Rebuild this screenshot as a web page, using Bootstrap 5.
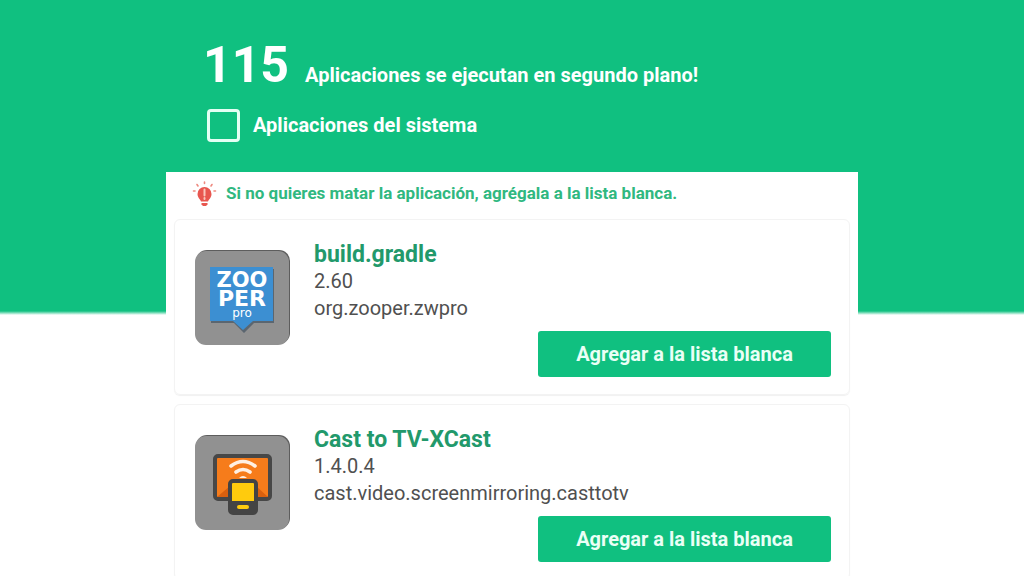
<!DOCTYPE html>
<html lang="es">
<head>
<meta charset="utf-8">
<meta name="viewport" content="width=device-width, initial-scale=1">
<title>Aplicaciones en segundo plano</title>
<link href="https://cdn.jsdelivr.net/npm/bootstrap@5.3.0/dist/css/bootstrap.min.css" rel="stylesheet">
<style>
  :root { --brand: #10c080; --title: #22996b; }
  body {
    font-family: Roboto, "Liberation Sans", sans-serif;
    font-size: 20px;
    line-height: 27px;
    color: #505050;
    background: linear-gradient(var(--brand) 311px, #fff 315px) no-repeat #fff;
    scrollbar-width: none;
  }
  body::-webkit-scrollbar { display: none; }
  .screen { max-width: 692px; }
  .summary { padding: 37px 40px 30px 37px; gap: 16px; }
  .count { font-size: 50px; line-height: 56px; }
  .system-check { gap: 13px; padding-left: 4px; }
  .system-check .form-check-input {
    width: 33px; height: 33px; border: 3px solid #e4fff4; border-radius: 4px;
    background-color: transparent;
  }
  .panel { padding: 0 8px 16px 8px; }
  .hint { height: 47px; padding: 0 18px 4px; gap: 9px; font-size: 17px; color: #30b880; }
  .app-card { border: 1px solid #f3f3f3; border-radius: 6px; padding: 21px 18px 17px 20px; margin-bottom: 9px; box-shadow: 0 1px 1px #f1f1f1; }
  .app-icon { margin-top: 9px; }
  .app-row { gap: 23px; }
  .app-name { font-size: 23px; line-height: 27px; color: var(--title); }
  .btn-add {
    --bs-btn-color: #eafff6; --bs-btn-bg: var(--brand);
    --bs-btn-hover-color: #fff; --bs-btn-hover-bg: #0eac73;
    --bs-btn-border-radius: 3px;
    width: 293px; height: 46px; font-size: 20px; font-weight: 700; border: 0;
  }
  .app-card .btn-add { margin-top: -15px; }
  .logo-text { font-family: "DejaVu Sans", sans-serif; font-weight: 700; fill: #fff; }
  .logo-note { font-weight: 400; }
</style>
</head>
<body>
<div class="screen container-fluid p-0">
  <header class="summary d-flex flex-column text-white fw-bold">
    <h1 class="d-flex align-items-baseline gap-3 m-0 fw-bold">
      <span class="count">115</span>
      <span class="fs-5">Aplicaciones se ejecutan en segundo plano!</span>
    </h1>
    <div class="system-check d-flex align-items-center">
      <input class="form-check-input m-0" type="checkbox" id="system">
      <label for="system">Aplicaciones del sistema</label>
    </div>
  </header>

  <main class="panel bg-white">
    <p class="hint d-flex align-items-center m-0 fw-bold">
      <svg width="25" height="26" viewBox="0 0 25 26" aria-hidden="true">
        <g stroke="#ee8a80" stroke-width="1.6" stroke-linecap="round">
          <path d="M12.500 1v1.500M5 3.500l1 1.500M20 3.500l-1 1.500M1.500 10h1.500M22 10h1.500"/>
        </g>
        <path d="M12.500 6a7 7 0 0 0-7 7c0 3.500 2.500 5 3.500 7.500h7c1-2.500 3.500-4 3.500-7.500a7 7 0 0 0-7-7z" fill="#e8564f"/>
        <path d="M9.500 22h6v1.500l-1.500 1.500h-3l-1.500-1.500z" fill="#e8564f"/>
        <path d="M12.500 8.500v6M12.500 17v1" stroke="#f9c6bb" stroke-width="2" stroke-linecap="round"/>
      </svg>
      Si no quieres matar la aplicación, agrégala a la lista blanca.
    </p>

    <article class="app-card">
      <div class="app-row d-flex align-items-start">
        <svg class="app-icon flex-shrink-0" width="96" height="96" viewBox="0 0 96 96" role="img" aria-label="Zooper pro">
          <rect x="1" y="0" width="94" height="94" rx="11" fill="#5d5d5d"/>
          <rect x="0" y="1" width="94" height="94" rx="11" fill="#919191"/>
          <path d="M16 19h63v54H59l-10 10-10-10H16z" fill="#5b6670"/>
          <path d="M15 17h63v54H58L48 80 38 71H15z" fill="#3c8fd2"/>
          <text class="logo-text" x="47" y="37" font-size="21" text-anchor="middle">ZOO</text>
          <text class="logo-text" x="47" y="56" font-size="22" text-anchor="middle">PER</text>
          <text class="logo-text logo-note" x="47" y="67" font-size="12" text-anchor="middle">pro</text>
        </svg>
        <div>
          <h2 class="app-name fw-bold m-0">build.gradle</h2>
          <div>2.60</div>
          <div>org.zooper.zwpro</div>
        </div>
      </div>
      <div class="d-flex justify-content-end"><button type="button" class="btn btn-add">Agregar a la lista blanca</button></div>
    </article>

    <article class="app-card">
      <div class="app-row d-flex align-items-start">
        <svg class="app-icon flex-shrink-0" width="96" height="96" viewBox="0 0 96 96" role="img" aria-label="XCast">
          <rect x="1" y="0" width="94" height="94" rx="11" fill="#5d5d5d"/>
          <rect x="0" y="1" width="94" height="94" rx="11" fill="#919191"/>
          <rect x="20" y="21" width="55" height="43" rx="3" fill="#f67c1b" stroke="#474747" stroke-width="4"/>
          <path d="M22 62l13-11v11zM73 62L61 51v11z" fill="#d9600f"/>
          <g fill="none" stroke="#fff0e2" stroke-width="3.600" stroke-linecap="round">
            <path d="M36 31q12-9 24 0M41 37q7-5 14 0"/>
          </g>
          <path d="M44 43q4-4 8 0z" fill="#fff0e2"/>
          <rect x="35" y="46" width="26" height="32" rx="3" fill="#ffcb0d" stroke="#444" stroke-width="4"/>
          <path d="M35 66h26v11H35z" fill="#444"/>
          <rect x="42" y="70" width="12" height="4" rx="2" fill="#ffcb0d"/>
        </svg>
        <div>
          <h2 class="app-name fw-bold m-0">Cast to TV-XCast</h2>
          <div>1.4.0.4</div>
          <div>cast.video.screenmirroring.casttotv</div>
        </div>
      </div>
      <div class="d-flex justify-content-end"><button type="button" class="btn btn-add">Agregar a la lista blanca</button></div>
    </article>
  </main>
</div>
<script src="https://cdn.jsdelivr.net/npm/bootstrap@5.3.0/dist/js/bootstrap.bundle.min.js"></script>
</body>
</html>
